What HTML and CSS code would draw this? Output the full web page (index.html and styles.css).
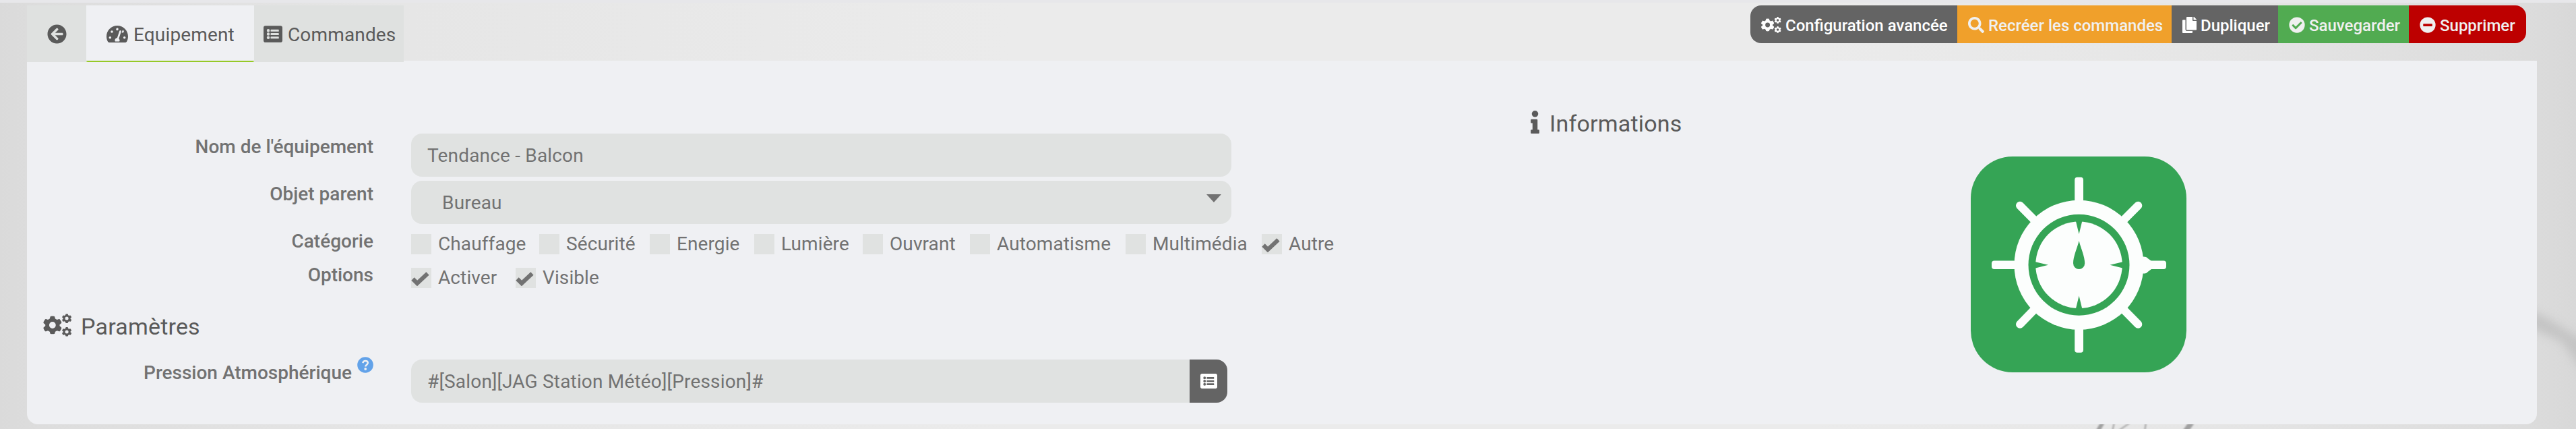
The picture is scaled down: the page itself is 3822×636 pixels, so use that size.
FILE: index.html
```html
<!DOCTYPE html>
<html lang="fr">
<head>
<meta charset="utf-8">
<title>Equipement</title>
<link rel="stylesheet" href="styles.css">
</head>
<body>
<svg class="defs" aria-hidden="true">
  <symbol id="arrow" viewBox="0 0 512 512"><path d="M256 504C119 504 8 393 8 256S119 8 256 8s248 111 248 248-111 248-248 248zm28.900-143.600L209.400 288H392c13.300 0 24-10.700 24-24v-16c0-13.300-10.700-24-24-24H209.400l75.500-72.400c9.700-9.300 9.900-24.800.4-34.300l-11-10.900c-9.400-9.400-24.600-9.400-33.900 0L107.700 239c-9.400 9.400-9.400 24.600 0 33.900l132.700 132.700c9.400 9.400 24.600 9.400 33.900 0l11-10.900c9.500-9.500 9.300-25-.4-34.300z"/></symbol>
  <symbol id="tacho" viewBox="0 32 576 448"><path d="M288 32C129 32 0 161 0 320c0 53 14 102 39 145 6 10 17 15 28 15h442c11 0 22-5 28-15 25-43 39-92 39-145C576 161 447 32 288 32zm0 64c15 0 27 10 31 24l-7 28c-5 7-14 12-24 12a32 32 0 0 1 0-64zM96 384a32 32 0 1 1 0-64 32 32 0 0 1 0 64zm48-160a32 32 0 1 1 0-64 32 32 0 0 1 0 64zm247-33-61 185c13 11 22 28 22 48 0 12-3 23-9 32H233c-6-9-9-20-9-32 0-34 27-62 61-64l61-184c4-13 18-20 30-16 13 5 20 18 15 31zm15 26 24-65c14-2 34 9 34 31 0 34-33 44-58 34zm74 167a32 32 0 1 1 0-64 32 32 0 0 1 0 64z"/></symbol>
  <symbol id="list" viewBox="0 32 512 448"><path fill-rule="evenodd" d="M464 480H48c-27 0-48-21-48-48V80c0-27 21-48 48-48h416c27 0 48 21 48 48v352c0 27-21 48-48 48zM128 120a40 40 0 1 0 0 80 40 40 0 0 0 0-80zm0 96a40 40 0 1 0 0 80 40 40 0 0 0 0-80zm0 96a40 40 0 1 0 0 80 40 40 0 0 0 0-80zm288-136v-32c0-7-5-12-12-12H204c-7 0-12 5-12 12v32c0 7 5 12 12 12h200c7 0 12-5 12-12zm0 96v-32c0-7-5-12-12-12H204c-7 0-12 5-12 12v32c0 7 5 12 12 12h200c7 0 12-5 12-12zm0 96v-32c0-7-5-12-12-12H204c-7 0-12 5-12 12v32c0 7 5 12 12 12h200c7 0 12-5 12-12z"/></symbol>
  <symbol id="cog" viewBox="-50 -50 100 100"><path fill-rule="evenodd" d="M-9-49Q0-51 9-49L12-46 15-35 25-29 35-33Q39-34 41-30L49-17Q51-13 49-11L39-3V5L48 12Q51 15 49 19L42 31Q39 35 35 34L25 30 15 36 12 47Q0 51-12 47L-15 36-25 30-35 34Q-39 35-42 31L-49 19Q-51 15-48 12L-39 5V-3L-49-11Q-51-13-49-17L-41-30Q-39-34-35-33L-25-29-15-35-12-46zM0-18a18 18 0 1 0 0 36 18 18 0 0 0 0-36z"/></symbol>
  <symbol id="cogs" viewBox="0 0 640 512"><use href="#cog" x="0" y="50" width="410" height="412"/><use href="#cog" x="415" y="2" width="220" height="210"/><use href="#cog" x="415" y="300" width="220" height="210"/></symbol>
  <symbol id="search" viewBox="0 0 512 512"><path d="M505 442.700 405.300 343c-4.500-4.500-10.600-7-17-7H372c27.600-35.300 44-79.700 44-128C416 93.100 322.900 0 208 0S0 93.100 0 208s93.100 208 208 208c48.300 0 92.700-16.400 128-44v16.300c0 6.400 2.500 12.500 7 17l99.700 99.700c9.400 9.400 24.600 9.400 33.900 0l28.300-28.300c9.400-9.400 9.400-24.600.1-34zM208 336c-70.700 0-128-57.200-128-128 0-70.700 57.200-128 128-128 70.700 0 128 57.200 128 128 0 70.700-57.200 128-128 128z"/></symbol>
  <symbol id="copy" viewBox="0 0 448 512"><path d="M320 448v40c0 13.300-10.700 24-24 24H24c-13.300 0-24-10.700-24-24V120c0-13.300 10.700-24 24-24h72v296c0 30.900 25.100 56 56 56h168zm0-344V0H152c-13.300 0-24 10.700-24 24v368c0 13.300 10.700 24 24 24h272c13.300 0 24-10.700 24-24V128H344c-13.200 0-24-10.800-24-24zm121-31L375 7c-4.500-4.500-10.600-7-17-7h-6v96h96v-6.100c0-6.400-2.500-12.500-7-16.900z"/></symbol>
  <symbol id="ok" viewBox="0 0 512 512"><path fill-rule="evenodd" d="M504 256a248 248 0 1 1-496 0 248 248 0 0 1 496 0zM227.300 387.300l184-184c6.200-6.200 6.200-16.400 0-22.600l-22.600-22.600c-6.200-6.200-16.400-6.200-22.600 0L216 308.100l-70.100-70.100c-6.200-6.200-16.400-6.200-22.600 0l-22.600 22.600c-6.200 6.200-6.200 16.400 0 22.600l104 104c6.200 6.300 16.400 6.300 22.600.1z"/></symbol>
  <symbol id="minus" viewBox="0 0 512 512"><path fill-rule="evenodd" d="M256 8a248 248 0 1 0 0 496 248 248 0 0 0 0-496zM124 296c-6.600 0-12-5.400-12-12v-56c0-6.600 5.400-12 12-12h264c6.600 0 12 5.400 12 12v56c0 6.600-5.400 12-12 12H124z"/></symbol>
  <symbol id="info" viewBox="0 0 192 512"><path d="M20 424.200h20V279.800H20c-11 0-20-9-20-20V212c0-11 9-20 20-20h112c11 0 20 9 20 20v212.200h20c11 0 20 9 20 20V492c0 11-9 20-20 20H20c-11 0-20-9-20-20v-47.800c0-11 9-20 20-20zM96 0a72 72 0 1 0 0 144A72 72 0 0 0 96 0z"/></symbol>
  <symbol id="help" viewBox="0 0 24 24"><circle cx="12" cy="12" r="11.800"/><path d="M8.200 9.200C8.900 7 10.200 6.100 12.100 6.100c2.200 0 3.700 1.200 3.700 3 0 2.500-3.500 2.600-3.500 5.300" fill="none" stroke="#eff0f3" stroke-width="2.500"/><circle cx="12.200" cy="18" r="1.900" fill="#eff0f3"/></symbol>
  <symbol id="check" viewBox="0 0 29 22"><path d="M3.500 11.500 10 18 25.500 3.500" fill="none" stroke="currentColor" stroke-width="6.200"/></symbol>
</svg>

<svg class="marble" viewBox="0 0 3822 636" aria-hidden="true">
  <path class="cloud" d="M3750 458 3780 472 3812 492 3840 506V560L3800 506 3750 484z"/>
  <g class="veins">
    <path d="M3112 640 3120 626" stroke-width="6"/>
    <path d="M3134 640 3137 626M3144 638 3160 627M3182 640 3184 626" stroke-width="2"/>
    <path d="M3242 640 3252 626" stroke-width="8"/>
  </g>
</svg>

<div class="topline"></div>
<div class="page">
  <header class="bar">
    <nav class="tabs">
      <a class="tab back"><svg class="i-arrow"><use href="#arrow"/></svg></a>
      <a class="tab active"><svg class="i-tacho"><use href="#tacho"/></svg><span>Equipement</span></a>
      <a class="tab commands"><svg class="i-list"><use href="#list"/></svg><span>Commandes</span></a>
    </nav>
    <div class="actions">
      <a class="btn config"><svg class="i-cogs"><use href="#cogs"/></svg><span>Configuration avancée</span></a>
      <a class="btn recreate"><svg><use href="#search"/></svg><span>Recréer les commandes</span></a>
      <a class="btn duplicate"><svg class="i-copy"><use href="#copy"/></svg><span>Dupliquer</span></a>
      <a class="btn save"><svg><use href="#ok"/></svg><span>Sauvegarder</span></a>
      <a class="btn remove"><svg><use href="#minus"/></svg><span>Supprimer</span></a>
    </div>
  </header>

  <main class="panel">
    <section class="form">
      <div class="row name"><label class="label">Nom de l'équipement</label><div class="field">Tendance - Balcon</div></div>
      <div class="row parent"><label class="label">Objet parent</label><div class="field select"><span>Bureau</span><i class="caret"></i></div></div>
      <div class="row checks">
        <label class="label">Catégorie</label>
        <div class="boxes">
          <span class="opt o1"><i class="box"></i>Chauffage</span>
          <span class="opt o2"><i class="box"></i>Sécurité</span>
          <span class="opt o3"><i class="box"></i>Energie</span>
          <span class="opt o4"><i class="box"></i>Lumière</span>
          <span class="opt o5"><i class="box"></i>Ouvrant</span>
          <span class="opt o6"><i class="box"></i>Automatisme</span>
          <span class="opt o7"><i class="box"></i>Multimédia</span>
          <span class="opt"><i class="box"><svg><use href="#check"/></svg></i>Autre</span>
        </div>
      </div>
      <div class="row checks">
        <label class="label">Options</label>
        <div class="boxes">
          <span class="opt p1"><i class="box"><svg><use href="#check"/></svg></i>Activer</span>
          <span class="opt"><i class="box"><svg><use href="#check"/></svg></i>Visible</span>
        </div>
      </div>
      <h2 class="legend params"><svg><use href="#cogs"/></svg><span>Paramètres</span></h2>
      <div class="row pressure">
        <label class="label">Pression Atmosphérique<svg class="i-help"><use href="#help"/></svg></label>
        <div class="group"><div class="field">#[Salon][JAG Station Météo][Pression]#</div><a class="pick"><svg><use href="#list"/></svg></a></div>
      </div>
    </section>
    <section class="infos">
      <h2 class="legend info"><svg><use href="#info"/></svg><span>Informations</span></h2>
      <svg class="logo" viewBox="0 0 320 320">
        <rect width="320" height="320" rx="62" fill="#35a455"/>
        <g fill="none" stroke="#fcfefd">
          <path d="M73 72.700 105 105M248.300 72.700 216 105M73 248.700 105 216M248.300 248.700 216 216" stroke-width="12" stroke-linecap="round"/>
        </g>
        <g fill="#fcfefd">
          <rect x="154.200" y="30.700" width="12.800" height="260" rx="4"/>
          <rect x="31" y="154.500" width="259" height="12.600" rx="4"/>
          <path d="M250 148.500h6q5 0 6 2l6 4.500v12l-6 4.500q-1 2-6 2h-6z"/>
          <circle cx="160.500" cy="160.800" r="96"/>
        </g>
        <circle cx="160.500" cy="160.800" r="75" fill="#35a455"/>
        <circle cx="160.500" cy="160.800" r="64.300" fill="#fcfefd"/>
        <g fill="#35a455">
          <path d="M155.700 95h9.800l-4.900 20zM155.700 226.500h9.800l-4.900-20zM95 155.900v9.800l20-4.900zM226.500 155.900v9.800l-20-4.900z"/>
          <path d="M160.600 125c3 12 8.600 23 8.600 33.300a8.600 8.600 0 0 1-17.200 0c0-10.300 5.600-21.300 8.600-33.300z"/>
        </g>
      </svg>
    </section>
  </main>
</div>
</body>
</html>
```

FILE: styles.css
```css
* { box-sizing: border-box; }
body {
  margin: 0;
  height: 636px;
  overflow: hidden;
  position: relative;
  font: 400 28px/40px Roboto, "Liberation Sans", sans-serif;
  color: #727272;
  background: linear-gradient(90deg, #dadada 0, #dddddd 60px, #e6e6e6 600px, #ebebeb 1500px, #ebebeb 2700px, #e6e6e6 3250px, #dcdcdc 3750px, #d8d8d8 3822px);
}
svg { display: block; fill: currentColor; flex: none; }
.defs { position: absolute; width: 0; height: 0; }
.marble { position: absolute; inset: 0; width: 3822px; height: 636px; }
.veins { fill: none; stroke: #8f8f8f; filter: blur(1px); opacity: .8; }
.cloud { fill: #c4c4c4; filter: blur(7px); }
.topline { height: 4px; background: #e7e7ea; position: relative; }
.page { position: relative; padding: 4px 58px 7px 40px; height: 632px; }

.bar { display: flex; justify-content: space-between; height: 84px; position: relative; z-index: 1; }
.tabs { display: flex; color: #5a5a5a; letter-spacing: .15px; }
.tab { display: flex; align-items: center; height: 84px; padding-top: 1px; background: #dfe1e0; white-space: nowrap; }
.tab span { margin-left: 8px; padding-top: 2px; }
.back { width: 88px; padding-left: 29.500px; }
.active { width: 249px; padding: 3px 0 0 30px; background: #eff0f3; border-bottom: 2px solid #96c927; border-radius: 0 0 2px 2px; }
.commands { width: 222px; padding-left: 14px; }
.i-arrow { width: 29px; height: 29px; }
.i-tacho { width: 32px; height: 25px; }
.i-list { width: 28px; height: 25px; }

.actions { display: flex; height: 56px; margin-right: 16px; border-radius: 16px; overflow: hidden; }
.btn { display: flex; align-items: center; padding: 1px 0 0 16px; gap: 6px; height: 56px; color: #f0f0f0; font-weight: 500; font-size: 24px; white-space: nowrap; }
.btn span { padding-top: 2px; }
.btn svg { width: 24px; height: 24px; }
.btn .i-cogs { width: 30px; }
.btn .i-copy { width: 21px; }
.config { width: 307px; background: #646464; color: #fff; }
.recreate { width: 318px; background: #f0a02b; }
.duplicate { width: 158px; background: #646464; color: #fff; }
.save { width: 194px; background: #51ab51; }
.remove { width: 174px; background: #bd0000; }

.panel { display: flex; height: 539px; margin-top: -2px; background: #eff0f3; border-radius: 0 0 16px 16px; padding-top: 59px; }
.form { width: 2190px; padding-top: 49px; }
.row { display: flex; }
.label { width: 514px; margin-right: 56px; text-align: right; font-weight: 500; display: block; white-space: nowrap; }
.field { width: 1217px; height: 64px; padding: 1px 24px 0; line-height: 64px; letter-spacing: .18px; border-radius: 16px; background: #e0e2e1; white-space: nowrap; }
.name, .parent { height: 70px; }
.select { display: flex; justify-content: space-between; padding: 1px 15px 0 46px; }
.caret { margin-top: 19px; width: 0; height: 0; border: 11.500px solid transparent; border-top: 12px solid #727272; border-bottom: 0; }
.checks { height: 50px; }
.boxes { display: flex; padding-top: 4px; }
.opt { display: flex; white-space: nowrap; letter-spacing: .1px; }
.box { width: 30px; height: 30px; margin: 5px 10px 0 0; background: #e0e2e1; }
.box svg { width: 29px; height: 22px; margin: 5px 0 0 -1px; }
.o1 { width: 190px; } .o2 { width: 164px; } .o3 { width: 155px; } .o4 { width: 161px; }
.o5 { width: 159px; } .o6 { width: 231px; } .o7 { width: 202px; } .p1 { width: 155px; }
.legend { display: flex; align-items: center; height: 40px; margin: 0; font-weight: 400; font-size: 34px; line-height: 40px; letter-spacing: .2px; color: #5a5a5a; }
.legend span { padding-top: 3px; }
.params { margin: 24px 0 31px 24px; }
.params svg { width: 43px; height: 34px; }
.params span { margin-left: 13px; }
.pressure .label { display: flex; justify-content: flex-end; }
.i-help { width: 24px; height: 24px; margin: -4px 0 0 8px; color: #62a2e9; }
.group { display: flex; }
.group .field { width: 1155px; border-radius: 16px 0 0 16px; }
.pick { display: flex; width: 56px; height: 64px; padding: 21px 0 0 16px; border-radius: 0 16px 16px 0; background: #646464; color: #fff; }
.pick svg { width: 25px; height: 22px; }
.info { padding-left: 41px; height: 64px; }
.info svg { width: 13px; height: 34px; }
.info span { margin-left: 15px; }
.logo { width: 320px; height: 320px; margin: 19px 0 0 694px; }
```
